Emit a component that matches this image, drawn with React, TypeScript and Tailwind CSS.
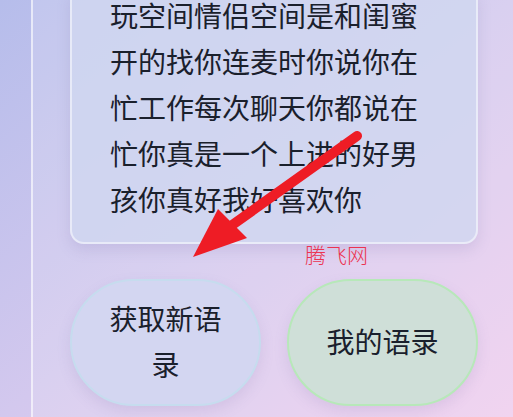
const quote =
  '玩空间情侣空间是和闺蜜开的找你连麦时你说你在忙工作每次聊天你都说在忙你真是一个上进的好男孩你真好我好喜欢你'

function Arrow() {
  return (
    <svg className="pointer-events-none absolute left-0 top-0" width="513" height="417" viewBox="0 0 513 417">
      <line x1="357" y1="136" x2="228" y2="228" stroke="#ee1c25" strokeWidth="10" strokeLinecap="round" />
      <polygon points="193,257 218,209 247,238" fill="#ee1c25" />
    </svg>
  )
}

export default function App() {
  return (
    <div
      className="relative h-[417px] w-[513px] overflow-hidden bg-gradient-to-br from-[#b6bdeb] via-[#d3c8ee] to-[#efcdee]"
      style={{ fontFamily: '"Noto Sans CJK SC", "Noto Sans", sans-serif' }}
    >
      <div className="ml-[31px] flex h-full flex-col border-l-2 border-white/60 bg-white/15 pl-[37px]">
        <div className="-mt-[8px] w-[408px] rounded-b-[14px] border-x-2 border-b-2 border-white/50 bg-[#cfd7f0]/80 pb-[20px] pl-[38px] pr-[40px] text-[28px] leading-[46px] text-[#1a202c] shadow-[0_6px_14px_rgba(120,110,170,0.18)]">
          {quote}
        </div>
        <div className="mt-[35px] flex gap-[26px]">
          <button className="flex h-[127px] w-[191px] items-center justify-center rounded-full border-2 border-[#c6dcee] bg-[#d3d6f1] px-7 pb-1 text-[28px] leading-[46px] text-[#1a202c] shadow-[0_6px_14px_rgba(120,110,170,0.15)]">
            获取新语录
          </button>
          <button className="flex h-[127px] w-[191px] items-center justify-center rounded-full border-2 border-[#b7e8b9] bg-[#cfdfd8] px-7 pb-1 text-[28px] leading-[46px] text-[#1a202c] shadow-[0_6px_14px_rgba(120,110,170,0.15)]">
            我的语录
          </button>
        </div>
      </div>
      <span className="absolute left-[305px] top-[240px] text-[21px] font-light leading-[28px] text-[#ec3350]">
        腾飞网
      </span>
      <Arrow />
    </div>
  )
}
